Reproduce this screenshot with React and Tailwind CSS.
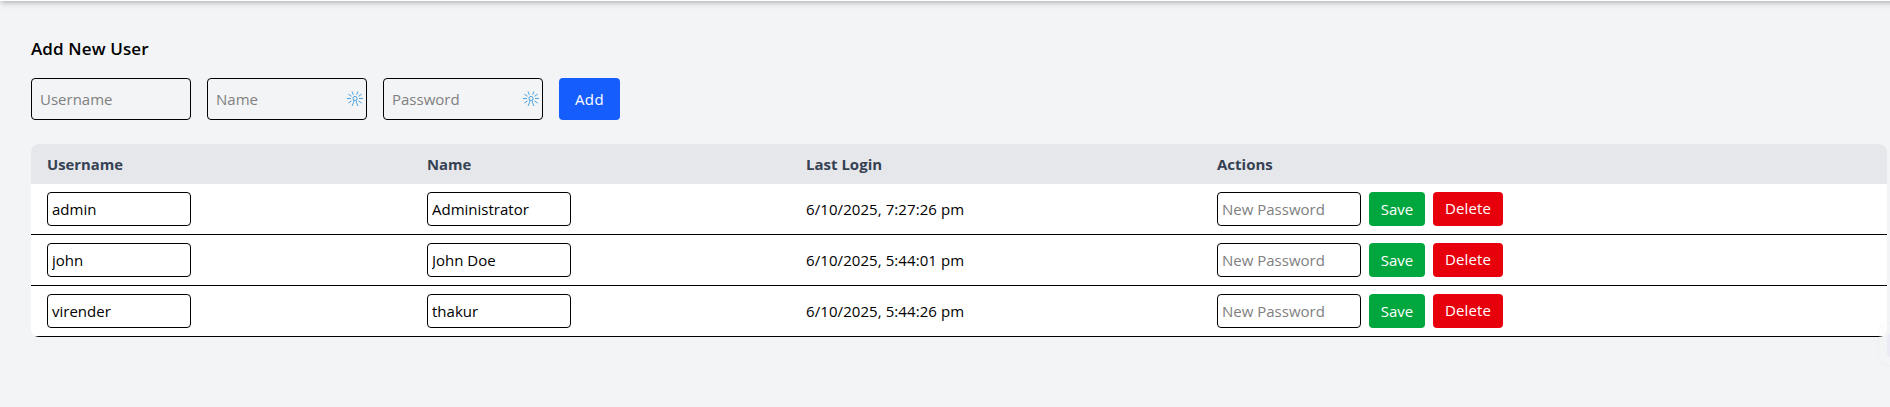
const USERS = [
  { username: "admin", name: "Administrator", lastLogin: "6/10/2025, 7:27:26 pm" },
  { username: "john", name: "John Doe", lastLogin: "6/10/2025, 5:44:01 pm" },
  { username: "virender", name: "thakur", lastLogin: "6/10/2025, 5:44:26 pm" },
];

function SparkIcon() {
  return (
    <svg className="h-4 w-4 shrink-0" viewBox="0 0 16 16" fill="none" stroke="#4fa3df" strokeWidth="1">
      <circle cx="8" cy="7.5" r="2.1" />
      <path d="M0 7.5h4M12 7.5h4M1.3 3.2l3.2 2.1M14.7 3.2l-3.2 2.1M1.3 12l3.2-2.1M14.7 12l-3.2-2.1M5 .4l1.3 3.4M11 .4L9.7 3.8M6.6 9.5v1.8L5 15M9.4 9.5v1.8L11 15" />
    </svg>
  );
}

function FormField({ placeholder, icon }) {
  return (
    <label className="flex h-[42px] w-40 items-center rounded border border-black pr-[3px] pl-2">
      <input
        placeholder={placeholder}
        className="min-w-0 flex-1 bg-transparent leading-6 outline-none placeholder:text-[#808080]"
      />
      {icon && <SparkIcon />}
    </label>
  );
}

function CellInput(props) {
  return (
    <input
      {...props}
      className="block h-[34px] w-36 rounded border border-black bg-white px-1 leading-6 outline-none placeholder:text-[#808080]"
    />
  );
}

export default function App() {
  return (
    <div className="relative h-[407px] overflow-hidden bg-gray-100 font-['Open_Sans','Noto_Sans',sans-serif] text-[15px] text-black">
      <div className="-mt-[63px] -mr-5 h-16 bg-white shadow-[0_4px_6px_-1px_rgba(0,0,0,0.14),0_2px_4px_-1px_rgba(0,0,0,0.14)]" />
      <main className="pt-[34px] pr-[3px] pl-[31px]">
        <h2 className="mb-[15px] text-[17px] leading-7 font-semibold tracking-[0.12px]">Add New User</h2>
        <form className="mb-6 flex gap-4">
          <FormField placeholder="Username" />
          <FormField placeholder="Name" icon />
          <FormField placeholder="Password" icon />
          <button type="button" className="h-[42px] w-[61px] rounded bg-[#155dfc] tracking-[0.4px] text-white">Add</button>
        </form>
        <div className="overflow-hidden rounded-lg bg-white">
          <div className="grid h-10 grid-cols-[380px_379px_411px_1fr] items-center bg-gray-200 text-[14.8px] font-bold text-gray-700">
            <div className="px-4">Username</div>
            <div className="px-4">Name</div>
            <div className="px-4 text-[15px]">Last Login</div>
            <div className="px-4 text-[15px]">Actions</div>
          </div>
          {USERS.map((u) => (
            <div key={u.username} className="grid h-[51px] grid-cols-[380px_379px_411px_1fr] items-center border-b border-black">
              <div className="px-4"><CellInput defaultValue={u.username} /></div>
              <div className="px-4"><CellInput defaultValue={u.name} /></div>
              <div className="px-4 tracking-[0.08px]">{u.lastLogin}</div>
              <div className="flex gap-2 px-4">
                <CellInput placeholder="New Password" />
                <button className="h-[34px] w-14 rounded bg-[#00a63e] text-white">Save</button>
                <button className="h-[34px] w-[70px] rounded bg-[#e7000b] pb-0.5 tracking-[0.1px] text-white">Delete</button>
              </div>
            </div>
          ))}
        </div>
      </main>
      <div className="absolute top-[324px] left-[1879px] h-[41px] w-8 rounded-lg bg-gray-100/20 pt-2.5 pl-2 shadow-[0_0_3px_rgba(0,0,0,0.05)]">
        <div className="h-[23px] w-6 rounded bg-[#ecebf5]" />
      </div>
    </div>
  );
}
